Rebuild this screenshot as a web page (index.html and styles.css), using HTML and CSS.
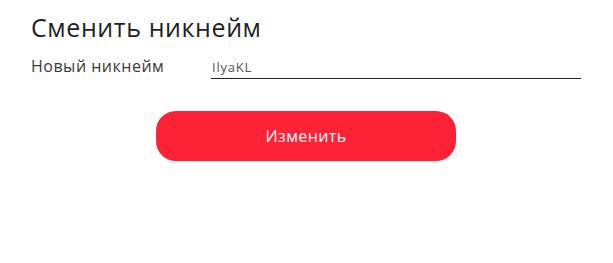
FILE: index.html
```html
<!DOCTYPE html>
<html lang="ru">

<head>
    <meta charset="UTF-8">
    <meta name="viewport" content="width=device-width, initial-scale=1.0">
    <title>Сменить никнейм</title>
    <link rel="stylesheet" href="styles.css">
</head>

<body>
    <div class="NickForm">
        <h2 class="title">Сменить никнейм</h2>
        <div class="row">
            <label class="label" for="nick">Новый никнейм</label>
            <input class="field" id="nick" type="text" value="IlyaKL">
        </div>
        <div class="actions">
            <button class="btn">Изменить</button>
        </div>
    </div>
</body>

</html>
```

FILE: styles.css
```css
* {
    margin: 0;
    padding: 0;
    box-sizing: border-box;
}

body {
    background-color: #fff;
    font-family: "Open Sans", "Liberation Sans", sans-serif;
    color: #222;
}

.NickForm {
    width: 550px;
    margin-left: 31px;
    padding-top: 12px;
}

.title {
    font-size: 25px;
    font-weight: 400;
    line-height: 30px;
    letter-spacing: 0.6px;
    color: #1f1f1f;
}

.row {
    display: flex;
    align-items: flex-end;
    margin-top: 14px;
}

.label {
    width: 180px;
    font-size: 16px;
    color: #3a3a3a;
    line-height: 20px;
    letter-spacing: 0.5px;
    padding-bottom: 3px;
}

.field {
    flex: 1;
    border: 0;
    border-bottom: 1px solid #222;
    outline: none;
    font-family: inherit;
    font-size: 13px;
    letter-spacing: 0.8px;
    color: #555;
    padding: 0 1px 2px;
    height: 22px;
}

.actions {
    display: flex;
    justify-content: center;
    margin-top: 32px;
}

.btn {
    width: 300px;
    height: 50px;
    border: 0;
    border-radius: 20px;
    background-color: #fe2237;
    color: #fff;
    font-family: inherit;
    font-size: 16px;
    letter-spacing: 0.4px;
    cursor: pointer;
}
```
